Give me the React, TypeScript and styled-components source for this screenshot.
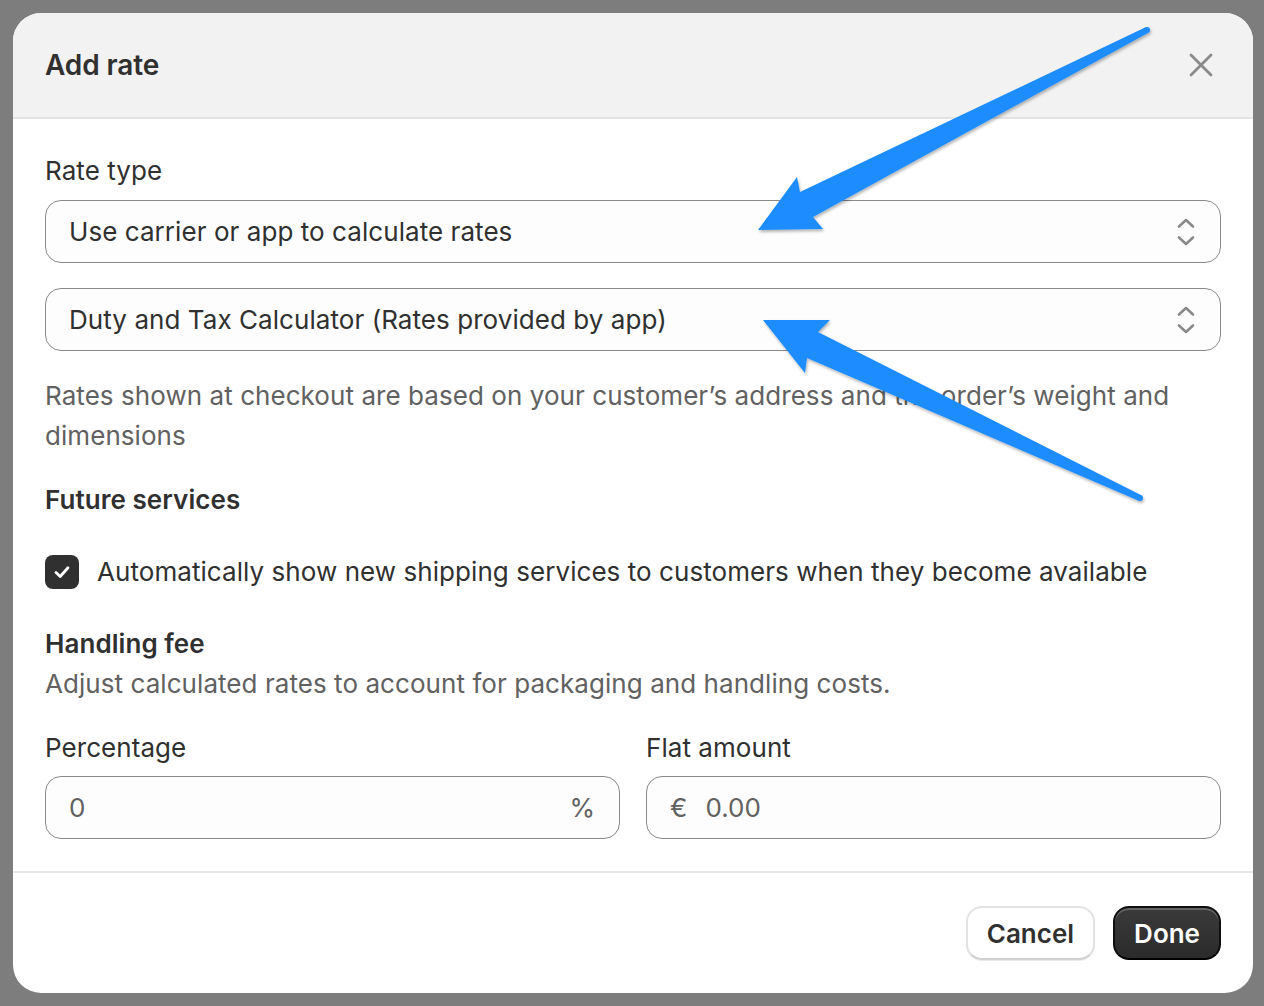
import { createGlobalStyle } from 'styled-components';
import styled from 'styled-components';

const text = '#303030';
const subdued = '#616161';
const arrowBlue = '#1b8cff';

const GlobalStyle = createGlobalStyle`
  html, body {
    margin: 0;
    padding: 0;
    background: #7d7d7d;
  }
  * {
    box-sizing: border-box;
  }
`;

const Backdrop = styled.div`
  position: relative;
  width: 1264px;
  height: 1006px;
  padding: 13px;
  background: #7d7d7d;
  font-family: Inter, 'Noto Sans', 'Liberation Sans', sans-serif;
  letter-spacing: 0.06px;
  color: ${text};
  overflow: hidden;
`;

const Modal = styled.div`
  display: flex;
  flex-direction: column;
  width: 1240px;
  height: 980px;
  background: #ffffff;
  border-radius: 28px;
  overflow: hidden;
`;

const Header = styled.div`
  display: flex;
  align-items: center;
  justify-content: space-between;
  height: 106px;
  padding: 0 32px;
  background: #f2f2f2;
  border-bottom: 2px solid #e3e3e3;
`;

const Title = styled.h2`
  margin: 0;
  font-size: 28px;
  font-weight: 600;
  letter-spacing: -0.1px;
  color: ${text};
`;

const CloseButton = styled.button`
  display: flex;
  align-items: center;
  justify-content: center;
  width: 40px;
  height: 40px;
  margin-right: 0;
  padding: 0;
  border: none;
  background: transparent;
`;

const Body = styled.div`
  flex: 1;
  display: flex;
  flex-direction: column;
  padding: 32px 32px 0;
  border-bottom: 2px solid #e6e6e6;
`;

const Block = styled.div<{ $top?: number }>`
  display: flex;
  flex-direction: column;
  margin-top: ${(p) => p.$top ?? 0}px;
`;

const Label = styled.div`
  font-size: 26px;
  line-height: 40px;
  color: ${text};
`;

const Heading = styled.div`
  font-size: 26px;
  line-height: 40px;
  font-weight: 600;
  color: ${text};
`;

const Help = styled.p`
  margin: 0;
  font-size: 26px;
  line-height: 40px;
  color: ${subdued};
`;

const SelectBox = styled.div<{ $top?: number }>`
  display: flex;
  align-items: center;
  justify-content: space-between;
  height: 63px;
  margin-top: ${(p) => p.$top ?? 0}px;
  padding: 0 24px 0 23px;
  background: #fdfdfd;
  border: 1.5px solid #8a8a8a;
  border-radius: 16px;
  font-size: 26px;
  color: ${text};
`;

const CheckRow = styled.label`
  display: flex;
  align-items: center;
  gap: 18px;
  font-size: 26px;
  line-height: 40px;
  color: ${text};
`;

const CheckMark = styled.span`
  display: flex;
  align-items: center;
  justify-content: center;
  width: 34px;
  height: 34px;
  border-radius: 8px;
  background: #303030;
`;

const FieldGrid = styled.div`
  display: grid;
  grid-template-columns: 1fr 1fr;
  column-gap: 26px;
  margin-top: 24px;
`;

const Field = styled.div`
  display: flex;
  flex-direction: column;
  gap: 8px;
`;

const InputBox = styled.div`
  display: flex;
  align-items: center;
  gap: 18px;
  height: 63px;
  padding: 0 24px 0 23px;
  background: #fdfdfd;
  border: 1.5px solid #8a8a8a;
  border-radius: 16px;
  font-size: 26px;
  color: ${subdued};
`;

const InputValue = styled.span`
  flex: 1;
`;

const Footer = styled.div`
  display: flex;
  align-items: center;
  justify-content: flex-end;
  gap: 18px;
  height: 120px;
  padding: 0 32px 0 0;
`;

const Button = styled.button<{ $primary?: boolean }>`
  height: 54px;
  padding: 0 19px;
  border-radius: 16px;
  font-family: inherit;
  font-size: 26px;
  font-weight: 600;
  color: ${(p) => (p.$primary ? '#ffffff' : text)};
  background: ${(p) => (p.$primary ? 'linear-gradient(#3a3a3a, #2b2b2b)' : '#ffffff')};
  border: ${(p) => (p.$primary ? '2px solid #0e0e0e' : '2px solid #e3e3e3')};
  border-bottom-color: ${(p) => (p.$primary ? '#000' : '#d0d0d0')};
  box-shadow: ${(p) =>
    p.$primary ? 'inset 0 2px 0 rgba(255,255,255,0.22)' : '0 1px 0 rgba(0,0,0,0.08)'};
`;

const Overlay = styled.svg`
  position: absolute;
  inset: 0;
  pointer-events: none;
`;

const CloseIcon = () => (
  <svg width="24" height="24" viewBox="0 0 24 24">
    <path d="M2 2 L22 22 M22 2 L2 22" stroke="#8a8a8a" strokeWidth="2.8" strokeLinecap="round" />
  </svg>
);

const SelectIcon = () => (
  <svg width="20" height="32" viewBox="0 0 20 32">
    <path
      d="M3 10.5 L10 4 L17 10.5 M3 21.5 L10 28 L17 21.5"
      fill="none"
      stroke="#8a8a8a"
      strokeWidth="2.6"
      strokeLinecap="round"
      strokeLinejoin="round"
    />
  </svg>
);

const CheckIcon = () => (
  <svg width="22" height="22" viewBox="0 0 22 22">
    <path
      d="M5 11.5 L9.2 15.5 L17 6.8"
      fill="none"
      stroke="#ffffff"
      strokeWidth="2.8"
      strokeLinecap="round"
      strokeLinejoin="round"
    />
  </svg>
);

// annotation arrows drawn over the screenshot
const Arrows = () => (
  <Overlay width="1264" height="1006" viewBox="0 0 1264 1006">
    <defs>
      <filter id="arrowShadow" x="-10%" y="-10%" width="120%" height="120%">
        <feDropShadow dx="1" dy="2" stdDeviation="1.5" floodColor="#000" floodOpacity="0.3" />
      </filter>
    </defs>
    <g fill={arrowBlue} filter="url(#arrowShadow)">
      <polygon points="758,230 797,177 800,192 1145.6,27.3 1148.4,32.7 813,217 823,229" />
      <circle cx="1147" cy="30" r="3" />
      <polygon points="763,320 830,320 818,332 1141.3,495.3 1138.7,500.7 807,358 805,373" />
      <circle cx="1140" cy="498" r="3" />
    </g>
  </Overlay>
);

export default function App() {
  return (
    <>
      <GlobalStyle />
      <Backdrop>
        <Modal>
          <Header>
            <Title>Add rate</Title>
            <CloseButton aria-label="Close">
              <CloseIcon />
            </CloseButton>
          </Header>

          <Body>
            <Block>
              <Label>Rate type</Label>
              <SelectBox $top={9}>
                <span>Use carrier or app to calculate rates</span>
                <SelectIcon />
              </SelectBox>
              <SelectBox $top={25}>
                <span>Duty and Tax Calculator (Rates provided by app)</span>
                <SelectIcon />
              </SelectBox>
              <Block $top={25}>
                <Help>
                  Rates shown at checkout are based on your customer’s address and the order’s weight and
                  dimensions
                </Help>
              </Block>
            </Block>

            <Block $top={24}>
              <Heading>Future services</Heading>
            </Block>

            <Block $top={32}>
              <CheckRow>
                <CheckMark>
                  <CheckIcon />
                </CheckMark>
                Automatically show new shipping services to customers when they become available
              </CheckRow>
            </Block>

            <Block $top={32}>
              <Heading>Handling fee</Heading>
              <Help>Adjust calculated rates to account for packaging and handling costs.</Help>
              <FieldGrid>
                <Field>
                  <Label>Percentage</Label>
                  <InputBox>
                    <InputValue>0</InputValue>
                    <span>%</span>
                  </InputBox>
                </Field>
                <Field>
                  <Label>Flat amount</Label>
                  <InputBox>
                    <span>€</span>
                    <InputValue>0.00</InputValue>
                  </InputBox>
                </Field>
              </FieldGrid>
            </Block>
          </Body>

          <Footer>
            <Button>Cancel</Button>
            <Button $primary>Done</Button>
          </Footer>
        </Modal>
        <Arrows />
      </Backdrop>
    </>
  );
}
